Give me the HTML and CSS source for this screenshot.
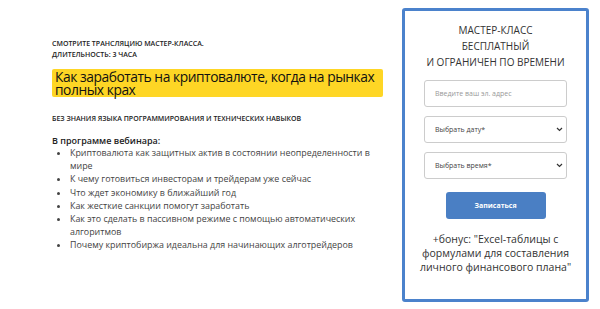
FILE: index.html
```html
<!DOCTYPE html>
<html lang="ru">
  <head>
    <meta charset="UTF-8" />
    <meta name="viewport" content="width=device-width, initial-scale=1.0" />
    <title>Мастер-класс</title>
    <link rel="stylesheet" href="styles.css">
  </head>
  <body>
    <div class="pagina">
      <div class="info">
        <p class="topo">СМОТРИТЕ ТРАНСЛЯЦИЮ МАСТЕР-КЛАССА.<br />ДЛИТЕЛЬНОСТЬ: 3 ЧАСА</p>
        <h1 class="titulo">Как заработать на криптовалюте, когда на рынках полных крах</h1>
        <p class="sub">БЕЗ ЗНАНИЯ ЯЗЫКА ПРОГРАММИРОВАНИЯ И ТЕХНИЧЕСКИХ НАВЫКОВ</p>
        <p class="programa">В программе вебинара:</p>
        <ul class="lista">
          <li>Криптовалюта как защитных актив в состоянии неопределенности в мире</li>
          <li>К чему готовиться инвесторам и трейдерам уже сейчас</li>
          <li>Что ждет экономику в ближайший год</li>
          <li>Как жесткие санкции помогут заработать</li>
          <li>Как это сделать в пассивном режиме с помощью автоматических алгоритмов</li>
          <li>Почему криптобиржа идеальна для начинающих алготрейдеров</li>
        </ul>
      </div>
      <div class="cartao">
        <p class="cabecalho">МАСТЕР-КЛАСС<br />БЕСПЛАТНЫЙ<br />И ОГРАНИЧЕН ПО ВРЕМЕНИ</p>
        <div class="campo">Введите ваш эл. адрес</div>
        <div class="campo seletor">
          <span>Выбрать дату*</span>
          <svg width="7" height="5" viewBox="0 0 7 5"><path d="M1 1l2.5 2.5L6 1" fill="none" stroke="#333" stroke-width="1.2"/></svg>
        </div>
        <div class="campo seletor">
          <span>Выбрать время*</span>
          <svg width="7" height="5" viewBox="0 0 7 5"><path d="M1 1l2.5 2.5L6 1" fill="none" stroke="#333" stroke-width="1.2"/></svg>
        </div>
        <div class="botao">Записаться</div>
        <p class="bonus">+бонус: "Excel-таблицы с формулами для составления личного финансового плана"</p>
      </div>
    </div>
  </body>
</html>
```
FILE: styles.css
```css
body {
  margin: 0;
  background-color: white;
  font-family: "Open Sans", "DejaVu Sans", sans-serif;
  color: #333;
}
p,
h1,
ul {
  margin: 0;
}
.pagina {
  display: flex;
  padding: 8px 0 0 52px;
  gap: 19px;
}
.info {
  width: 331px;
  padding-top: 30px;
}
.topo {
  font-size: 7px;
  font-weight: 600;
  line-height: 11px;
  color: #222;
}
.titulo {
  margin-top: 9px;
  padding: 1px 0 1px 3px;
  background-color: #fed625;
  border-radius: 2px;
  font-size: 13.8px;
  font-weight: 400;
  letter-spacing: -0.45px;
  line-height: 13px;
  color: #111;
}
.sub {
  margin-top: 17px;
  font-size: 7px;
  font-weight: 600;
  line-height: 10px;
  color: #222;
}
.programa {
  margin-top: 12px;
  font-size: 9px;
  font-weight: 600;
  line-height: 10px;
  color: #222;
}
.lista {
  padding-left: 18px;
  font-size: 8.9px;
  line-height: 13.2px;
  color: #444;
}
.cartao {
  width: 181px;
  height: 288px;
  border: 3px solid #4b82cc;
  border-radius: 3px;
  display: flex;
  flex-direction: column;
  align-items: center;
}
.cabecalho {
  margin-top: 11px;
  text-align: center;
  font-size: 10px;
  line-height: 16px;
  color: #333;
}
.campo {
  box-sizing: border-box;
  width: 143px;
  height: 27px;
  margin-top: 9px;
  padding: 0 10px;
  border: 1px solid #ccc;
  border-radius: 3px;
  display: flex;
  align-items: center;
  font-size: 7px;
  color: #999;
}
.campo:first-of-type {
  margin-top: 10px;
}
.seletor {
  justify-content: space-between;
  padding-right: 3px;
  color: #444;
}
.botao {
  width: 100px;
  height: 27px;
  margin-top: 13px;
  background-color: #4a7fc4;
  border-radius: 3px;
  display: flex;
  align-items: center;
  justify-content: center;
  font-size: 7px;
  font-weight: 700;
  color: white;
}
.bonus {
  margin-top: 13px;
  padding: 0 8px;
  text-align: center;
  font-size: 10.5px;
  line-height: 14px;
  color: #333;
}
```
